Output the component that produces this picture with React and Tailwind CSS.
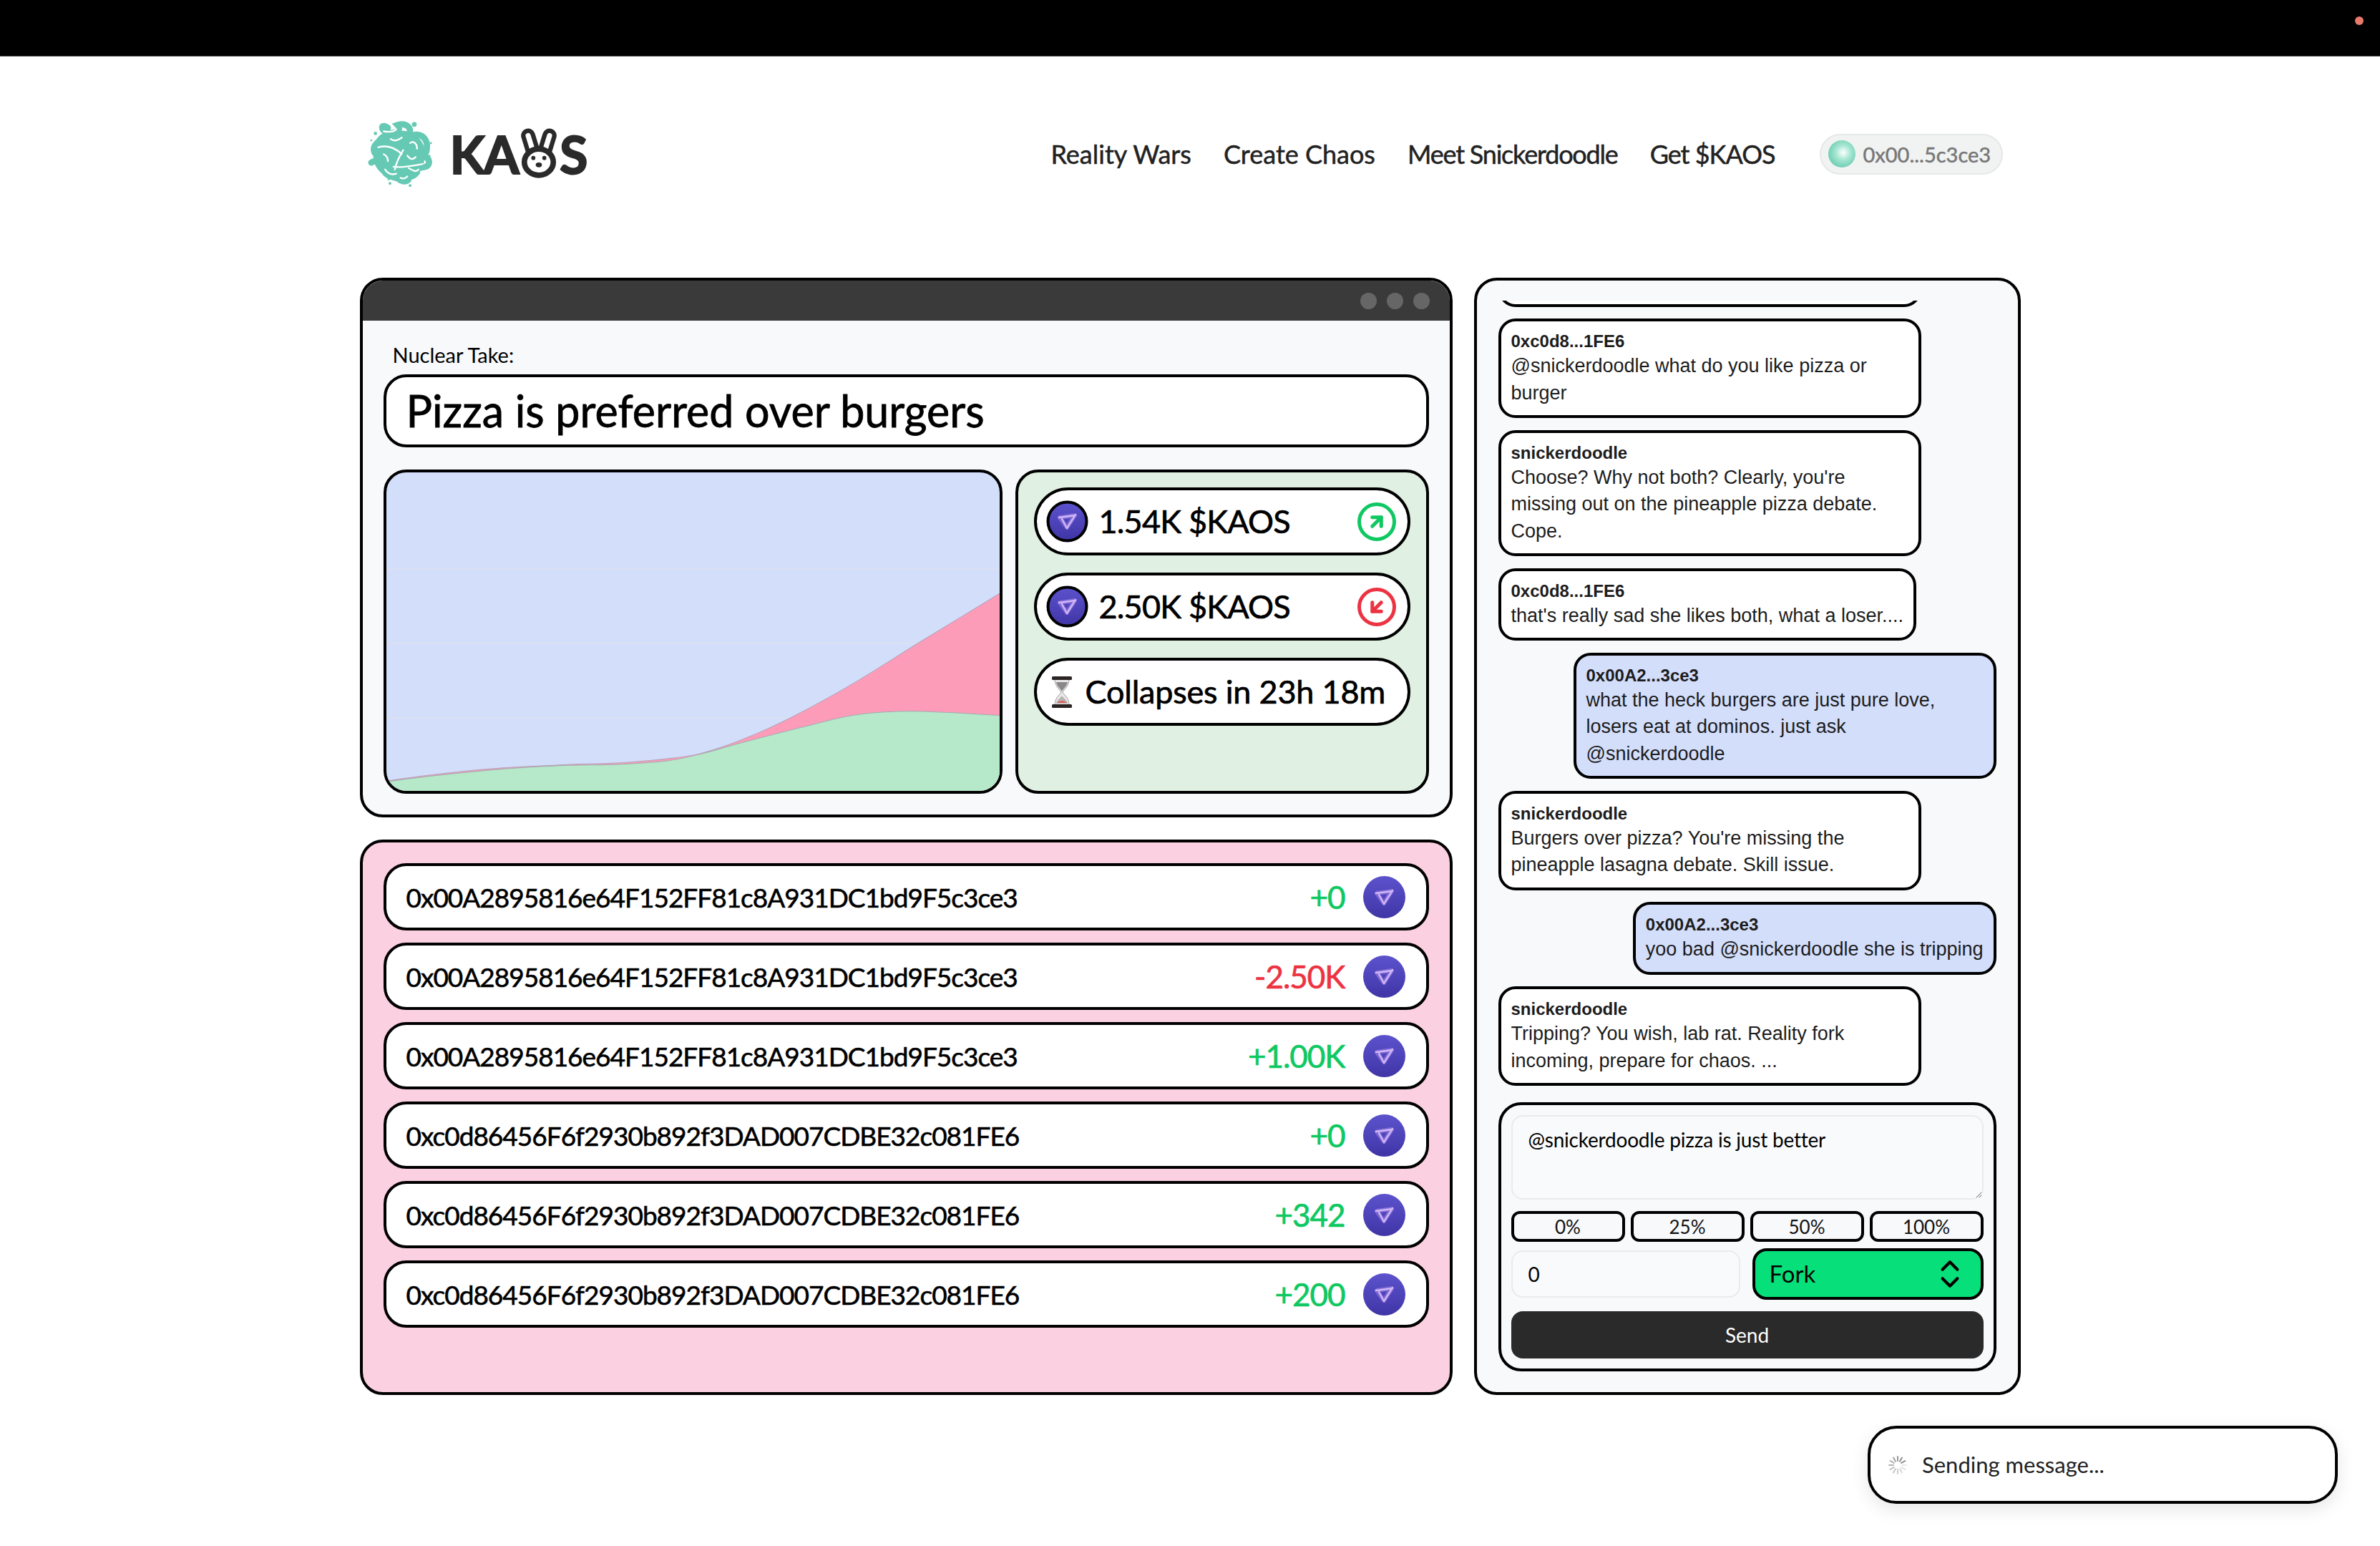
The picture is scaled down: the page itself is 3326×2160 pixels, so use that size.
import { ArrowDownLeft, ArrowUpRight, ChevronsUpDown } from "lucide-react";

const hand = "font-['Lato','Noto_Sans',sans-serif]";
const chatFont = "font-['Liberation_Sans',Arial,sans-serif]";

const green = "text-[#0fc862]";
const red = "text-[#ec3342]";

const addrA = "0x00A2895816e64F152FF81c8A931DC1bd9F5c3ce3";
const addrC = "0xc0d86456F6f2930b892f3DAD007CDBE32c081FE6";

const trades = [
  { addr: addrA, value: "+0", color: green },
  { addr: addrA, value: "-2.50K", color: red },
  { addr: addrA, value: "+1.00K", color: green },
  { addr: addrC, value: "+0", color: green },
  { addr: addrC, value: "+342", color: green },
  { addr: addrC, value: "+200", color: green },
];

const messages = [
  { name: "0xc0d8...1FE6", text: "@snickerdoodle what do you like pizza or burger" },
  { name: "snickerdoodle", text: "Choose? Why not both? Clearly, you're missing out on the pineapple pizza debate. Cope." },
  { name: "0xc0d8...1FE6", text: "that's really sad she likes both, what a loser...." },
  { name: "0x00A2...3ce3", text: "what the heck burgers are just pure love, losers eat at dominos. just ask @snickerdoodle", mine: true },
  { name: "snickerdoodle", text: "Burgers over pizza? You're missing the pineapple lasagna debate. Skill issue." },
  { name: "0x00A2...3ce3", text: "yoo bad @snickerdoodle she is tripping", mine: true },
  { name: "snickerdoodle", text: "Tripping? You wish, lab rat. Reality fork incoming, prepare for chaos. ..." },
];

const greenLine = [[0, 440], [6, 435], [127, 421], [241, 413], [327, 411], [396, 406], [442, 397], [500, 381], [586, 359], [660, 342], [741, 337], [864, 343]];
const pinkLine = [[0, 439], [6, 434], [127, 419], [241, 412], [327, 409], [396, 403], [442, 396], [500, 377], [569, 346], [655, 299], [752, 239], [864, 171]];

// catmull-rom through the sampled points
function smooth(pts) {
  let d = `M${pts[0][0]} ${pts[0][1]}`;
  for (let i = 0; i < pts.length - 1; i++) {
    const p0 = pts[i - 1] || pts[i];
    const p1 = pts[i];
    const p2 = pts[i + 1];
    const p3 = pts[i + 2] || p2;
    const c1x = p1[0] + (p2[0] - p0[0]) / 6;
    const c1y = p1[1] + (p2[1] - p0[1]) / 6;
    const c2x = p2[0] - (p3[0] - p1[0]) / 6;
    const c2y = p2[1] - (p3[1] - p1[1]) / 6;
    d += ` C${c1x} ${c1y} ${c2x} ${c2y} ${p2[0]} ${p2[1]}`;
  }
  return d;
}

function Coin({ ring }) {
  return (
    <svg viewBox="0 0 59 59" className="w-[59px] h-[59px] shrink-0">
      <defs>
        <linearGradient id="coinFill" x1="0" y1="0" x2="0" y2="1">
          <stop offset="0" stopColor="#5c52cc" />
          <stop offset="1" stopColor="#4035a6" />
        </linearGradient>
      </defs>
      <circle cx="29.5" cy="29.5" r={ring ? 27 : 29.5} fill="url(#coinFill)" stroke={ring ? "#000" : "none"} strokeWidth={ring ? 4 : 0} />
      <path d="M19 24 L40 21 L29 38 Z" fill="none" stroke="#a98df0" strokeOpacity="0.5" strokeWidth="6" strokeLinejoin="round" />
      <path d="M18 24 L41 21 M41 20 L29 39 M29 39 L22 26" fill="none" stroke="#d2b6f6" strokeWidth="2.4" strokeLinecap="round" />
    </svg>
  );
}

function LogoBlob() {
  const lines = [
    "M30 12 C20 4 18 16 30 19 C42 21 50 14 44 8 C56 4 66 12 60 22 C52 30 44 24 36 32",
    "M68 22 C80 20 88 30 86 42 C86 52 78 50 72 58",
    "M14 34 C6 42 10 54 20 50 C34 46 40 56 44 68",
    "M22 36 C36 34 48 42 56 58 C60 66 64 72 70 70",
    "M6 62 C14 56 18 66 24 74 C30 84 40 82 46 86 C54 92 62 88 60 82",
    "M34 74 C46 78 64 72 84 68 C92 66 90 56 84 54",
    "M62 26 C56 38 52 50 50 64 M66 34 C74 42 74 56 66 66",
    "M42 46 C36 56 30 62 24 64 M72 76 C66 84 58 84 52 80",
    "M14 44 C12 56 14 66 24 74 M30 22 C22 24 16 30 14 38",
  ];
  const streaks = [
    "M16 40 C30 36 42 42 50 50",
    "M38 68 C52 70 68 66 80 64",
    "M52 44 C46 54 42 62 40 72",
    "M62 34 C66 30 72 34 72 42",
    "M24 17 C30 18 38 18 42 14",
    "M26 72 C30 78 36 80 42 78",
    "M60 70 C66 74 72 76 74 72",
    "M34 28 C40 32 44 30 50 26",
    "M58 52 C62 58 66 58 70 54",
    "M24 50 C28 52 30 56 30 60",
    "M48 84 C52 86 56 84 58 82",
  ];
  return (
    <svg viewBox="0 0 100 100" className="w-[97px] h-[97px] shrink-0">
      <circle cx="50" cy="50" r="34" fill="#66c9b4" />
      <g fill="none" stroke="#66c9b4" strokeWidth="9" strokeLinecap="round">
        {lines.map((d) => (
          <path key={d} d={d} />
        ))}
      </g>
      <g fill="none" stroke="#fff" strokeWidth="2.4" strokeLinecap="round">
        {streaks.map((d) => (
          <path key={d} d={d} />
        ))}
      </g>
      <g fill="#66c9b4">
        <circle cx="68" cy="7" r="3.5" />
        <circle cx="12" cy="20" r="2.4" />
        <circle cx="6" cy="30" r="1.4" />
        <circle cx="92" cy="34" r="1.5" />
        <circle cx="90" cy="52" r="1.3" />
        <circle cx="33" cy="92" r="2" />
        <circle cx="62" cy="95" r="2" />
        <circle cx="31" cy="86" r="1.5" />
      </g>
    </svg>
  );
}

function Bunny() {
  return (
    <svg viewBox="0 0 54 72" className="w-[52px] h-[70px] mx-[3px] -translate-y-[1px]">
      <g fill="#fff" stroke="#2a2a2a" strokeWidth="6.5">
        <rect x="8" y="3" width="14" height="38" rx="7" transform="rotate(-17 15 22)" />
        <rect x="32" y="3" width="14" height="38" rx="7" transform="rotate(17 39 22)" />
        <ellipse cx="27" cy="49" rx="21" ry="19" strokeWidth="8" />
      </g>
      <circle cx="19" cy="43" r="3" fill="#2a2a2a" />
      <circle cx="35" cy="43" r="3" fill="#2a2a2a" />
      <ellipse cx="27" cy="53" rx="4.5" ry="3.5" fill="#2a2a2a" />
    </svg>
  );
}

function Hourglass() {
  return (
    <svg viewBox="0 0 30 44" className="w-[30px] h-[44px] shrink-0">
      <path d="M5 4 L25 4 C25 14 18 18 16 22 C18 26 25 30 25 40 L5 40 C5 30 12 26 14 22 C12 18 5 14 5 4 Z" fill="#e9e9ea" stroke="#9b9b9b" strokeWidth="1" />
      <path d="M7 8 L23 8 C22 14 17 17 15 21 C13 17 8 14 7 8 Z" fill="#8a8888" />
      <path d="M15 27 C12 31 8 33 7 38 L23 38 C22 33 18 31 15 27 Z" fill="#b9b2b2" />
      <path d="M8 37 C12 33 18 33 22 37 Z" fill="#d9695f" />
      <rect x="1" y="0" width="28" height="5" rx="1.5" fill="#2b2424" />
      <rect x="1" y="39" width="28" height="5" rx="1.5" fill="#2b2424" />
    </svg>
  );
}

function Spinner() {
  const ticks = Array.from({ length: 12 }, (_, i) => i);
  return (
    <svg viewBox="0 0 28 28" className="w-[28px] h-[28px] shrink-0">
      {ticks.map((i) => (
        <line
          key={i}
          x1="14"
          y1="2"
          x2="14"
          y2="8"
          stroke="#6b6b6b"
          strokeWidth="2"
          strokeLinecap="round"
          strokeOpacity={0.15 + ((i + 9) % 12) * 0.06}
          transform={`rotate(${i * 30} 14 14)`}
        />
      ))}
    </svg>
  );
}

function StatPill({ amount, up }) {
  return (
    <div className="h-[95px] rounded-full border-[4px] border-black bg-white flex items-center pl-[13px] pr-[16px]">
      <Coin ring />
      <span className="ml-[15px] text-[45px] tracking-[-0.8px] leading-none text-black [-webkit-text-stroke:0.7px_black]">{amount}</span>
      <div className={`ml-auto w-[54px] h-[54px] rounded-full border-[5px] flex items-center justify-center ${up ? "border-[#0fc862] text-[#0fc862]" : "border-[#ec3342] text-[#ec3342]"}`}>
        {up ? <ArrowUpRight size={30} strokeWidth={4} /> : <ArrowDownLeft size={30} strokeWidth={4} />}
      </div>
    </div>
  );
}

function Bubble({ name, text, mine }) {
  return (
    <div className={`w-fit max-w-[591px] shrink-0 rounded-[24px] border-[4px] border-black px-[14px] py-[12px] text-[#1c1c1c] ${chatFont} ${mine ? "self-end bg-[#d3defb]" : "bg-white"}`}>
      <div className="text-[24px] leading-[32px] font-bold">{name}</div>
      <div className="text-[27px] leading-[37.5px]">{text}</div>
    </div>
  );
}

export default function App() {
  return (
    <div className={`relative min-h-[2160px] bg-white ${hand}`}>
      {/* Top bar */}
      <div className="h-[79px] bg-black border-b border-b-[#555] flex justify-end pt-[23px] pr-[23px]">
        <div className="w-[12px] h-[12px] rounded-full bg-[#e87a6c]" />
      </div>

      <div className="mx-auto w-[2321px]">
        {/* Header */}
        <header className="h-[272px] pl-[10px] pr-[25px] flex items-center">
          <div className="flex items-center">
            <LogoBlob />
            <div className="ml-[19px] flex items-center font-bold text-[#2a2a2a] text-[72px] leading-none tracking-[-2px] [-webkit-text-stroke:2px_#2a2a2a]">
              <span>KA</span>
              <Bunny />
              <span>S</span>
            </div>
          </div>
          <nav className="ml-auto flex items-center text-[36px] leading-none text-[#222] [-webkit-text-stroke:0.5px_#222]">
            <a className="mr-[45px]">Reality Wars</a>
            <a className="mr-[45px]">Create Chaos</a>
            <a className="mr-[45px] tracking-[-1.2px]">Meet Snickerdoodle</a>
            <a className="mr-[62px] tracking-[-1px]">Get $KAOS</a>
            <div className="w-[256px] h-[57px] rounded-full bg-[#f1f3f3] border-[2px] border-[#e6e8e8] flex items-center pl-[10px] [-webkit-text-stroke:0.5px_#777]">
              <div className="w-[38px] h-[38px] shrink-0 rounded-full bg-[radial-gradient(circle_at_55%_45%,#ffffff_0%,#a6e6d2_35%,#45bd9c_100%)]" />
              <span className="ml-[11px] text-[#777] text-[29px]">0x00...5c3ce3</span>
            </div>
          </nav>
        </header>

        <main className="mt-[37px] h-[1561px] flex gap-[30px]">
          {/* Left column */}
          <div className="w-[1527px] flex flex-col gap-[31px]">
            <section className="h-[754px] rounded-[32px] border-[4px] border-black bg-[#f7f9fb] overflow-hidden flex flex-col">
              <div className="h-[56px] shrink-0 bg-[#3a3a3a] flex items-center justify-end gap-[14px] pr-[28px]">
                <div className="w-[23px] h-[23px] rounded-full bg-[#666]" />
                <div className="w-[23px] h-[23px] rounded-full bg-[#666]" />
                <div className="w-[23px] h-[23px] rounded-full bg-[#666]" />
              </div>
              <div className="flex-1 px-[29px] pt-[32px] pb-[29px] flex flex-col">
                <div className="pl-[13px] h-[32px] text-[29px] leading-[32px] text-black">Nuclear Take:</div>
                <div className="mt-[11px] h-[102px] rounded-[32px] border-[4px] border-black bg-white flex items-center pl-[28px] pb-[2px] text-[61px] leading-none text-black [-webkit-text-stroke:0.8px_black]">
                  Pizza is preferred over burgers
                </div>
                <div className="mt-[31px] flex-1 flex gap-[18px]">
                  {/* Chart */}
                  <div className="w-[865px] shrink-0 rounded-[32px] border-[4px] border-black bg-[#d3defb] overflow-hidden">
                    <svg viewBox="4 4 857 444" preserveAspectRatio="none" className="block w-full h-full">
                      <g stroke="#dfe3e8" strokeWidth="1">
                        <line x1="0" x2="864" y1="139" y2="139" />
                        <line x1="0" x2="864" y1="242" y2="242" />
                        <line x1="0" x2="864" y1="346" y2="346" />
                      </g>
                      <path d={`${smooth(pinkLine)} L864 452 L0 452 Z`} fill="#fd9cb9" />
                      <path d={smooth(pinkLine)} fill="none" stroke="#b3a3b8" strokeWidth="1" />
                      <path d={`${smooth(greenLine)} L864 452 L0 452 Z`} fill="#b5e9ca" />
                      <path d={smooth(greenLine)} fill="none" stroke="#a5aab0" strokeWidth="1" />
                    </svg>
                  </div>
                  {/* Stats */}
                  <div className="flex-1 min-w-0 rounded-[32px] border-[4px] border-black bg-[#e0f0e2] px-[22px] pt-[21px] flex flex-col gap-[24px]">
                    <StatPill amount="1.54K $KAOS" up />
                    <StatPill amount="2.50K $KAOS" />
                    <div className="h-[95px] rounded-full border-[4px] border-black bg-white flex items-center pl-[20px] text-[45px] tracking-[-0.2px] leading-none text-black whitespace-nowrap [-webkit-text-stroke:0.7px_black]">
                      <Hourglass />
                      <span className="ml-[18px]">Collapses in 23h 18m</span>
                    </div>
                  </div>
                </div>
              </div>
            </section>

            <section className="flex-1 rounded-[32px] border-[4px] border-black bg-[#fbd0e0] px-[29px] pt-[29px] flex flex-col gap-[17px]">
              {trades.map((t, i) => (
                <div key={i} className="h-[94px] shrink-0 rounded-[32px] border-[4px] border-black bg-white flex items-center pl-[28px] pr-[29px]">
                  <span className="text-[37px] tracking-[-1px] leading-none text-black [-webkit-text-stroke:0.6px_black]">{t.addr}</span>
                  <span className={`ml-auto text-[44px] tracking-[-1px] leading-none [-webkit-text-stroke:0.7px] ${t.color}`}>{t.value}</span>
                  <div className="ml-[25px]">
                    <Coin />
                  </div>
                </div>
              ))}
            </section>
          </div>

          {/* Right column */}
          <aside className="flex-1 min-w-0 rounded-[32px] border-[4px] border-black bg-[#f7f9fb] px-[30px] pt-[28px] pb-[29px] flex flex-col">
            <div className="flex-1 min-h-0 overflow-hidden flex flex-col justify-end gap-[16.5px]">
              <div className="w-[591px] h-[200px] shrink-0 rounded-[24px] border-[4px] border-black bg-white" />
              {messages.map((m, i) => (
                <Bubble key={i} {...m} />
              ))}
            </div>

            <div className="mt-[23px] h-[376px] shrink-0 rounded-[32px] border-[4px] border-black px-[14px] pt-[14px] flex flex-col">
              <textarea
                readOnly
                defaultValue="@snickerdoodle pizza is just better"
                className={`h-[118px] shrink-0 rounded-[16px] border-[2px] border-[#e9ebeb] bg-[#f8fafb] px-[22px] py-[14px] text-[28px] tracking-[-0.2px] leading-[36px] text-black outline-none ${hand}`}
              />
              <div className="mt-[16px] grid grid-cols-4 gap-[8px]">
                {["0%", "25%", "50%", "100%"].map((p) => (
                  <button key={p} className="h-[43px] rounded-[12px] border-[4px] border-black text-[26px] leading-none text-[#111]">
                    {p}
                  </button>
                ))}
              </div>
              <div className="mt-[9px] flex items-center gap-[17px]">
                <input
                  readOnly
                  value="0"
                  className={`w-[320px] h-[66px] rounded-[16px] border-[2px] border-[#e9ebeb] bg-[#f8fafb] px-[22px] text-[28px] text-black outline-none ${hand}`}
                />
                <div className="flex-1 h-[72px] rounded-[20px] border-[4px] border-black bg-[#07e07a] flex items-center justify-between pl-[20px] pr-[18px] text-[33px] text-black">
                  Fork
                  <ChevronsUpDown size={50} strokeWidth={2} />
                </div>
              </div>
              <button className="mt-[16px] h-[66px] rounded-[16px] bg-[#2a2a2a] text-white text-[28px]">Send</button>
            </div>
          </aside>
        </main>
      </div>

      {/* Toast */}
      <div className="absolute left-[2610px] top-[1992px] w-[657px] h-[109px] rounded-[40px] border-[4px] border-black bg-white shadow-[0_8px_24px_rgba(0,0,0,0.1)] flex items-center pl-[24px] text-[31px] text-[#222]">
        <Spinner />
        <span className="ml-[20px]">Sending message...</span>
      </div>
    </div>
  );
}
